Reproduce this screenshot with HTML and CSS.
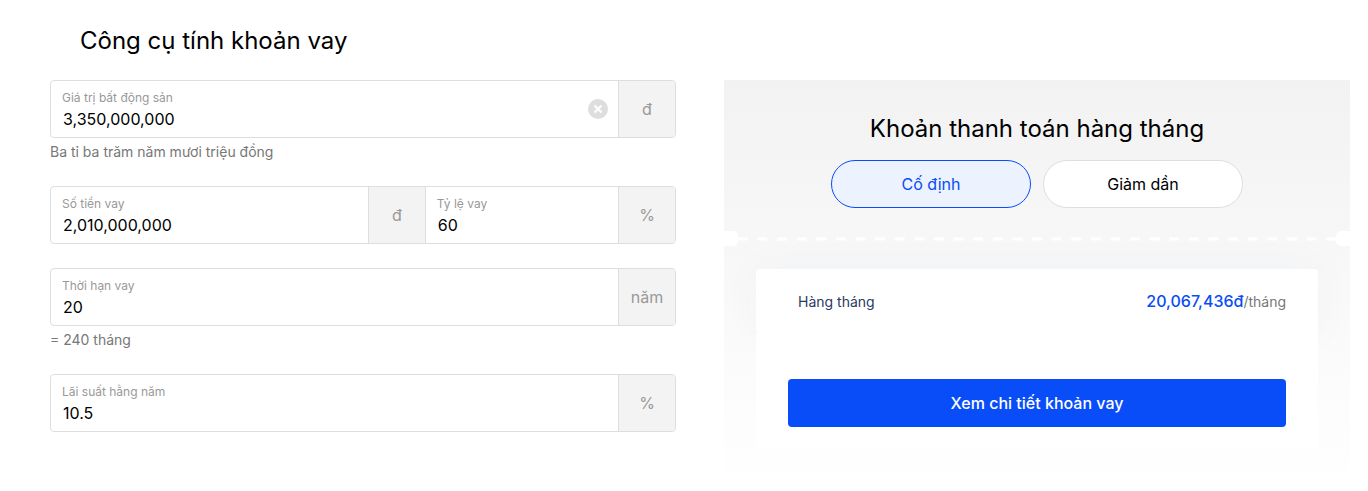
FILE: index.html
```html
<!DOCTYPE html>
<html lang="vi">
<head>
    <meta charset="UTF-8">
    <meta name="viewport" content="width=device-width, initial-scale=1.0">
    <title>Công cụ tính khoản vay</title>
    <link rel="stylesheet" href="styles.css">
</head>
<body>
    <main class="loan-tool">
        <h1 class="title">Công cụ tính khoản vay</h1>
        <section class="columns">
            <form class="loan-form">
                <div class="group">
                    <div class="field">
                        <div class="control">
                            <label for="price">Giá trị bất động sản</label>
                            <input type="text" id="price" value="3,350,000,000">
                        </div>
                        <button type="button" class="clear" aria-label="Xóa">
                            <svg width="20" height="20" viewBox="0 0 20 20">
                                <circle cx="10" cy="10" r="10" fill="#dedede"/>
                                <path d="M6.5 6.5l7 7M13.5 6.5l-7 7" stroke="#fff" stroke-width="2.2"/>
                            </svg>
                        </button>
                        <span class="unit">đ</span>
                    </div>
                    <p class="hint">Ba tỉ ba trăm năm mươi triệu đồng</p>
                </div>
                <div class="field">
                    <div class="part amount">
                        <div class="control">
                            <label for="loan">Số tiền vay</label>
                            <input type="text" id="loan" value="2,010,000,000">
                        </div>
                        <span class="unit">đ</span>
                    </div>
                    <div class="part rate">
                        <div class="control">
                            <label for="ratio">Tỷ lệ vay</label>
                            <input type="text" id="ratio" value="60">
                        </div>
                        <span class="unit">%</span>
                    </div>
                </div>
                <div class="group">
                    <div class="field">
                        <div class="control">
                            <label for="years">Thời hạn vay</label>
                            <input type="text" id="years" value="20">
                        </div>
                        <span class="unit">năm</span>
                    </div>
                    <p class="hint">= 240 tháng</p>
                </div>
                <div class="field">
                    <div class="control">
                        <label for="interest">Lãi suất hằng năm</label>
                        <input type="text" id="interest" value="10.5">
                    </div>
                    <span class="unit">%</span>
                </div>
            </form>

            <section class="payment">
                <h2 class="payment-title">Khoản thanh toán hàng tháng</h2>
                <div class="tabs">
                    <button type="button" class="tab active">Cố định</button>
                    <button type="button" class="tab">Giảm dần</button>
                </div>
                <div class="divider">
                    <span class="notch left"></span>
                    <svg class="dashes" height="4">
                        <line x1="0" y1="2" x2="100%" y2="2" pathLength="610" stroke="#fff" stroke-width="3" stroke-dasharray="10 10"/>
                    </svg>
                    <span class="notch right"></span>
                </div>
                <div class="result">
                    <div class="monthly">
                        <span class="monthly-label">Hàng tháng</span>
                        <span class="per-month"><strong>20,067,436đ</strong>/tháng</span>
                    </div>
                    <div class="action">
                        <button type="button" class="detail">Xem chi tiết khoản vay</button>
                    </div>
                </div>
            </section>
        </section>
    </main>
</body>
</html>
```

FILE: styles.css
```css
* {
    box-sizing: border-box;
}

body {
    margin: 0;
    font-family: Inter, "Noto Sans", sans-serif;
    font-size: 16px;
    color: #000;
    background-color: #fff;
}

button,
input {
    font-family: inherit;
    font-size: 16px;
    color: inherit;
}

h1,
h2,
p {
    margin: 0;
}

.loan-tool {
    padding: 24px 18px 0 50px;
}

.title,
.payment-title {
    font-size: 24px;
    font-weight: 400;
    line-height: 34px;
}

.title {
    padding-left: 30px;
    margin-bottom: 22px;
}

.columns {
    display: grid;
    grid-template-columns: 1fr 1fr;
    gap: 48px;
    align-items: start;
}

.loan-form {
    display: flex;
    flex-direction: column;
    gap: 24px;
}

.field {
    display: flex;
    height: 58px;
    border: 1px solid #dedede;
    border-radius: 4px;
    overflow: hidden;
}

.control {
    flex: 1;
    min-width: 0;
    display: flex;
    flex-direction: column;
    padding: 8px 0 0 11px;
}

.control label {
    font-size: 12px;
    line-height: 18px;
    color: #999;
}

.control input {
    width: 100%;
    height: 24px;
    padding: 0 1px;
    border: 0;
    outline: 0;
    background: none;
}

.clear {
    display: flex;
    align-items: center;
    padding: 0 10px;
    border: 0;
    background: none;
}

.unit {
    flex: none;
    display: flex;
    align-items: center;
    justify-content: center;
    width: 57px;
    color: #999;
    background-color: #f3f3f3;
    border-left: 1px solid #dedede;
}

.part {
    display: flex;
}

.amount {
    flex: 3;
}

.rate {
    flex: 2;
    border-left: 1px solid #dedede;
}

.hint {
    padding-top: 4px;
    font-size: 14px;
    line-height: 20px;
    color: #777;
}

.payment {
    padding: 32px 0 44px;
    background: linear-gradient(#f2f2f2, #fff);
}

.payment-title {
    text-align: center;
}

.tabs {
    display: flex;
    justify-content: center;
    gap: 12px;
    margin-top: 14px;
}

.tab {
    width: 200px;
    height: 48px;
    border: 1px solid #dedede;
    border-radius: 24px;
    background-color: #fff;
}

.tab.active {
    color: #084df7;
    border-color: #084df7;
    background-color: #edf2ff;
}

.divider {
    display: flex;
    align-items: center;
    margin: 23px 0;
}

.notch {
    width: 14px;
    height: 15px;
    background-color: #fff;
}

.notch.left {
    border-radius: 0 5px 5px 0;
}

.notch.right {
    border-radius: 5px 0 0 5px;
}

.dashes {
    flex: 1;
    min-width: 0;
}

.result {
    margin: 0 32px;
}

.monthly {
    display: flex;
    justify-content: space-between;
    align-items: center;
    height: 64px;
    padding: 0 32px 0 42px;
    border-radius: 4px;
    background-color: #fff;
    box-shadow: 0 0 40px rgba(40, 70, 150, 0.04);
}

.monthly-label,
.per-month {
    font-size: 14px;
}

.monthly-label {
    color: #2c3a61;
}

.per-month {
    color: #777;
}

.per-month strong {
    font-size: 16px;
    font-weight: 500;
    color: #084df7;
}

/* covers the lower half of the card shadow */
.action {
    position: relative;
    padding: 46px 32px 20px;
    background-color: #fff;
}

.detail {
    display: block;
    width: 100%;
    height: 48px;
    border: 0;
    border-radius: 4px;
    font-weight: 500;
    color: #fff;
    background-color: #084df7;
}
```
